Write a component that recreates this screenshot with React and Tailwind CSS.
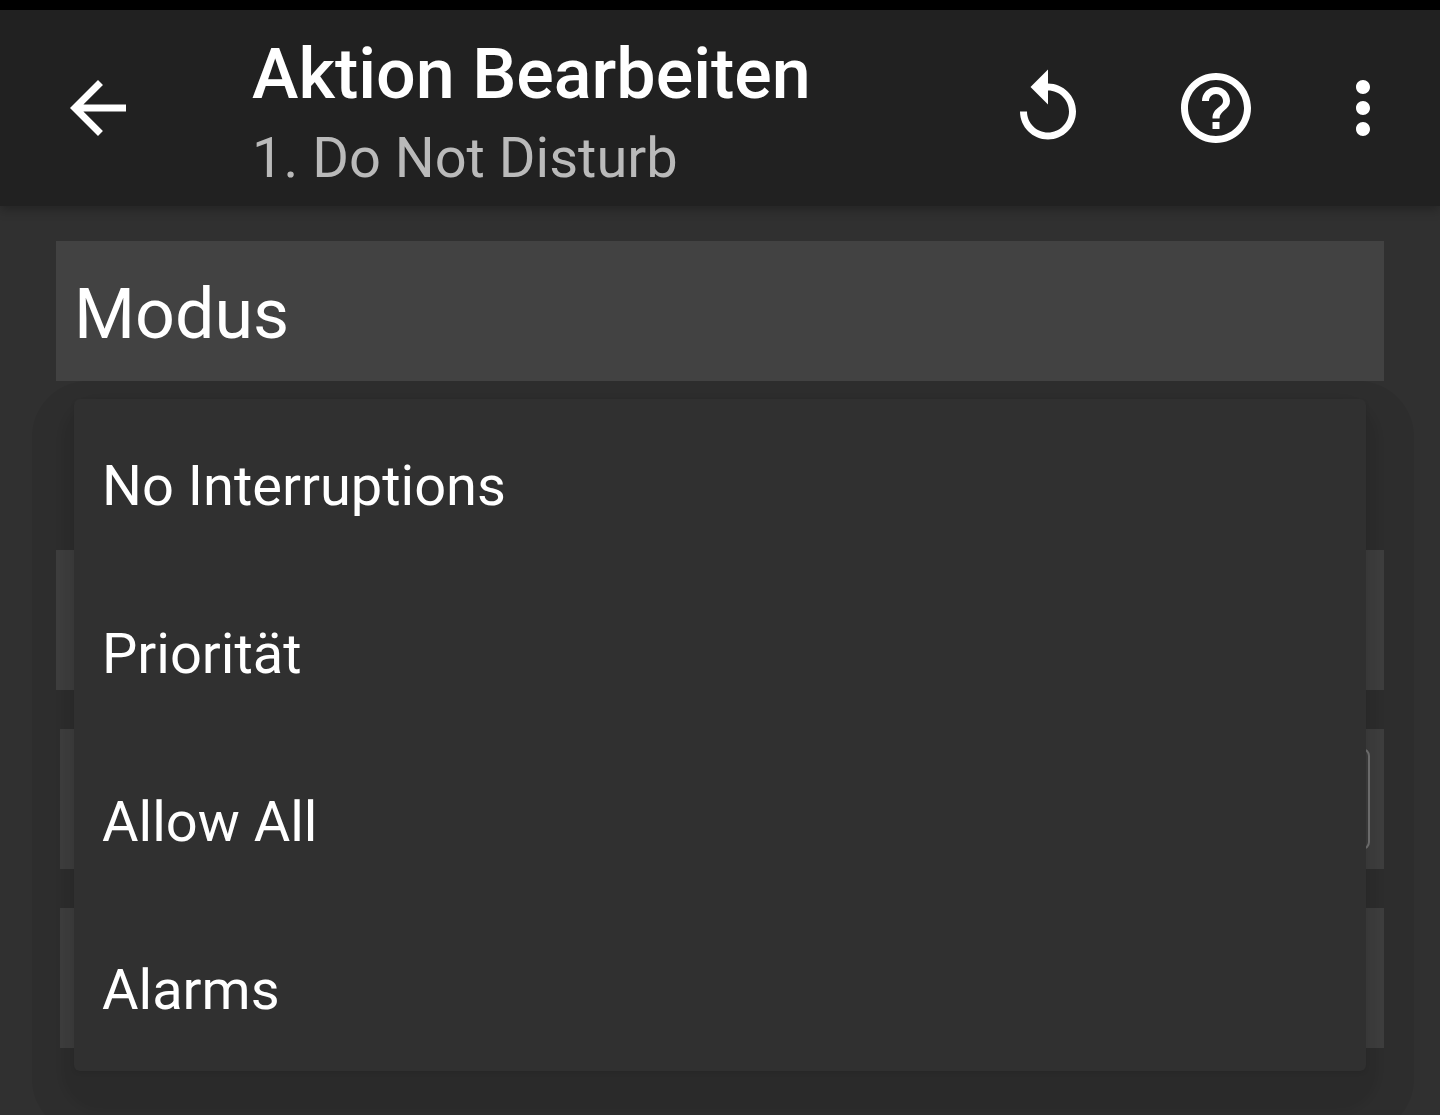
const modes = ["No Interruptions", "Priorität", "Allow All", "Alarms"];

function Icon({ d }) {
  return (
    <svg viewBox="0 0 24 24" className="size-[84px]" fill="currentColor" aria-hidden="true">
      <path d={d} />
    </svg>
  );
}

function IconButton({ label, d, className }) {
  return (
    <button
      type="button"
      aria-label={label}
      className={`flex shrink-0 items-center justify-center ${className}`}
    >
      <Icon d={d} />
    </button>
  );
}

function Header() {
  return (
    <header className="relative z-10 flex h-[196px] items-center bg-[#212121] pr-3.5 shadow-[0_4px_10px_rgba(0,0,0,0.25)]">
      <IconButton
        label="Zurück"
        className="h-full w-[196px]"
        d="M20 11H7.83l5.59-5.59L12 4l-8 8 8 8 1.41-1.41L7.83 13H20v-2z"
      />
      <div className="ml-14 min-w-0 flex-1 pt-4 whitespace-nowrap">
        <h1 className="text-[70px] leading-[84px] font-medium">Aktion Bearbeiten</h1>
        <p className="text-[56px] leading-[84px] text-[#bababa]">1. Do Not Disturb</p>
      </div>
      <IconButton
        label="Zurücksetzen"
        className="h-full w-[168px]"
        d="M12 5V1L7 6l5 5V7c3.31 0 6 2.69 6 6s-2.69 6-6 6-6-2.69-6-6H4c0 4.42 3.58 8 8 8s8-3.58 8-8-3.58-8-8-8z"
      />
      <IconButton
        label="Hilfe"
        className="h-full w-[168px]"
        d="M11 18h2v-2h-2v2zm1-16C6.48 2 2 6.48 2 12s4.48 10 10 10 10-4.48 10-10S17.52 2 12 2zm0 18c-4.41 0-8-3.59-8-8s3.59-8 8-8 8 3.59 8 8-3.59 8-8 8zm0-14c-2.21 0-4 1.79-4 4h2c0-1.1.9-2 2-2s2 .9 2 2c0 2-3 1.75-3 5h2c0-2.25 3-2.5 3-5 0-2.21-1.79-4-4-4z"
      />
      <IconButton
        label="Weitere Optionen"
        className="h-full w-[126px]"
        d="M12 8c1.1 0 2-.9 2-2s-.9-2-2-2-2 .9-2 2 .9 2 2 2zm0 2c-1.1 0-2 .9-2 2s.9 2 2 2 2-.9 2-2-.9-2-2-2zm0 6c-1.1 0-2 .9-2 2s.9 2 2 2 2-.9 2-2-.9-2-2-2z"
      />
    </header>
  );
}

function ModeMenu() {
  return (
    <div className="absolute inset-x-[18px] top-full z-10 mt-[18px]">
      {/* two-step ambient shadow around the menu */}
      <div className="pointer-events-none absolute -top-[18px] -right-12 -bottom-16 -left-[42px] rounded-[56px] bg-black/6" />
      <div className="pointer-events-none absolute -inset-x-3 top-0 -bottom-10 rounded-[40px] bg-black/6 blur-[3px]" />
      <ul
        role="listbox"
        aria-labelledby="mode-label"
        className="relative rounded-md bg-[#303030] shadow-[0_2px_4px_rgba(0,0,0,0.08)]"
      >
        {modes.map((mode) => (
          <li key={mode} role="option" aria-selected="false">
            <button
              type="button"
              className="flex h-[168px] w-full items-center px-7 pt-1.5 text-left text-[56px] leading-[66px]"
            >
              {mode}
            </button>
          </li>
        ))}
      </ul>
    </div>
  );
}

export default function App() {
  return (
    <div className="min-h-screen overflow-hidden bg-[#303030] font-[Roboto,sans-serif] text-white">
      <div className="h-2.5 bg-black" />
      <Header />
      <main className="px-14 pt-[35px] pb-[67px]">
        <section className="relative mb-[169px]">
          <h2
            id="mode-label"
            className="flex h-[140px] items-center bg-[#424242] px-[18px] pt-1.5 text-[70px] leading-[84px]"
          >
            Modus
          </h2>
          <ModeMenu />
        </section>
        <div className="flex flex-col gap-[39px]">
          <div className="h-[140px] bg-[#424242]" />
          <div className="ml-1 flex h-[140px] items-center justify-end bg-[#424242] pr-3.5">
            <div className="h-[102px] w-28 rounded-lg border-2 border-[#7a7a7a]" />
          </div>
          <div className="ml-1 h-[140px] bg-[#424242]" />
        </div>
      </main>
    </div>
  );
}
